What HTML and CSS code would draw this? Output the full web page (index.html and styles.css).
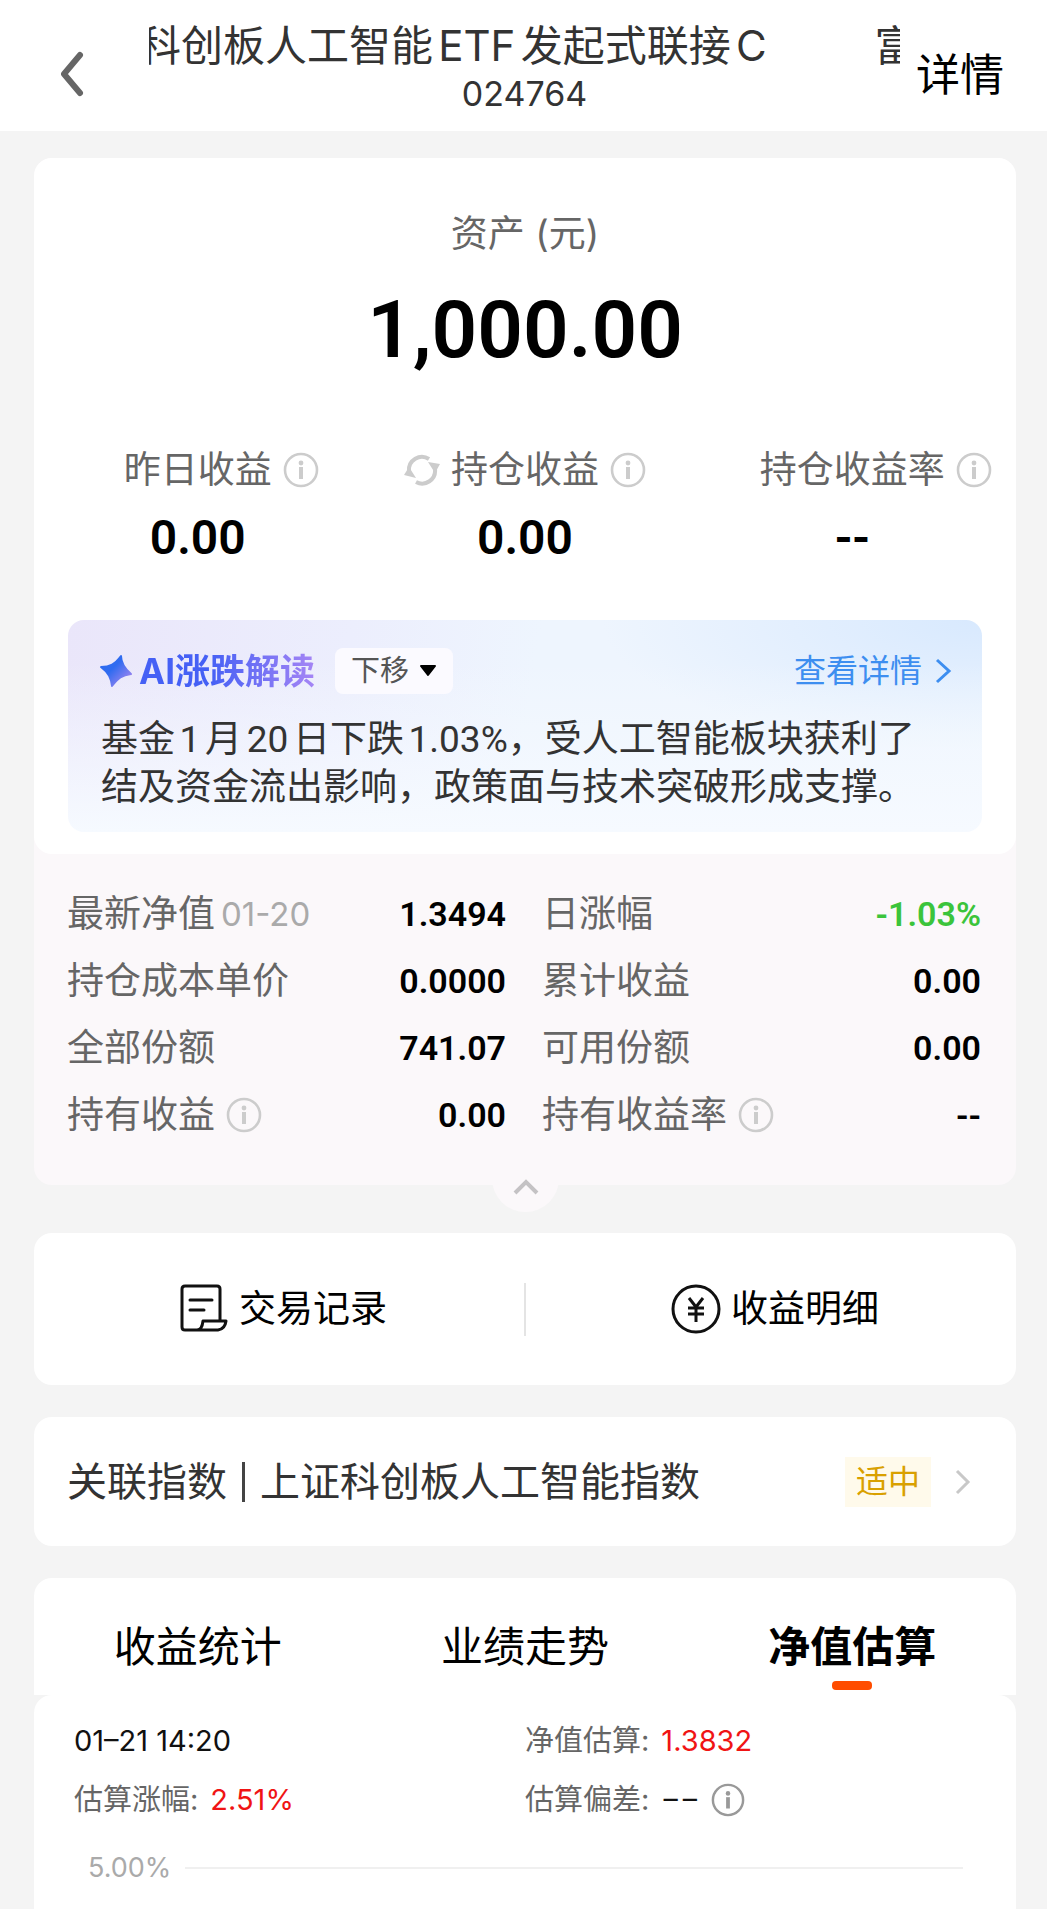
FILE: index.html
```
<!DOCTYPE html>
<html lang="zh-CN">
<head>
<meta charset="utf-8">
<meta name="viewport" content="width=device-width, initial-scale=1">
<title>基金持仓详情</title>
<link rel="stylesheet" href="styles.css">
</head>
<body>
<svg class="sprite" aria-hidden="true">
  <symbol id="info" viewBox="0 0 36 36">
    <circle cx="18" cy="18" r="16" fill="none" stroke="currentColor" stroke-width="2.6"/>
    <circle cx="18" cy="11" r="2.4" fill="currentColor"/>
    <path d="M18 15V27" stroke="currentColor" stroke-width="4" fill="none"/>
  </symbol>
</svg>

<header class="topbar">
  <button class="back" type="button" aria-label="返回">
    <svg width="28" height="46" viewBox="0 0 28 46"><path d="M22 4 6 23l16 19" fill="none" stroke="#666" stroke-width="6" stroke-linecap="round" stroke-linejoin="round"/></svg>
  </button>
  <div class="heading">
    <h1 class="marquee"><span class="marquee-text">科创板人工智能ETF发起式联接C</span><span>富</span></h1>
    <div class="code">024764</div>
  </div>
  <a class="detail-link" href="#">详情</a>
</header>

<main class="page">
  <section class="holding">
    <div class="summary">
      <div class="asset-label">资产 (元)</div>
      <div class="asset-value">1,000.00</div>
      <div class="stats">
        <div class="stat">
          <div class="stat-label"><span></span><span>昨日收益</span><svg class="info"><use href="#info"/></svg></div>
          <div class="stat-value">0.00</div>
        </div>
        <div class="stat">
          <div class="stat-label">
            <svg class="refresh" viewBox="0 0 36 36"><g fill="none" stroke="currentColor" stroke-width="4"><path d="M5 19A13 13 0 0 1 25 7"/><path d="M31 17A13 13 0 0 1 12 30"/></g><path d="M0 23 5 15 12 26zM36 12 24 10 31 21z" fill="currentColor"/></svg>
            <span>持仓收益</span><svg class="info"><use href="#info"/></svg></div>
          <div class="stat-value">0.00</div>
        </div>
        <div class="stat">
          <div class="stat-label"><span></span><span>持仓收益率</span><svg class="info"><use href="#info"/></svg></div>
          <div class="stat-value">--</div>
        </div>
      </div>

      <article class="ai">
        <div class="ai-head">
          <svg class="star" viewBox="0 0 30 32"><defs><linearGradient id="sg" x1="0" y1="0" x2="1" y2="1"><stop offset=".4" stop-color="#2f6bf0"/><stop offset="1" stop-color="#b98cf0"/></linearGradient></defs><path d="M20 1C20 8 23 13 30 19 21 20 17 23 11 31 10 23 8 18 0 12 9 12 14 9 20 1Z" fill="url(#sg)" stroke="url(#sg)" stroke-width="2" stroke-linejoin="round"/></svg>
          <h2 class="ai-title">AI涨跌解读</h2>
          <button class="move" type="button">下移<svg width="18" height="12" viewBox="0 0 18 12"><path d="M2 1h14L9 10z" fill="#000" stroke="#000" stroke-width="2" stroke-linejoin="round"/></svg></button>
          <a class="more" href="#">查看详情<svg width="18" height="28" viewBox="0 0 18 28"><path d="m3 3 12 11L3 25" fill="none" stroke="currentColor" stroke-width="3"/></svg></a>
        </div>
        <p class="ai-text">基金1月20日下跌1.03%，受人工智能板块获利了结及资金流出影响，政策面与技术突破形成支撑。</p>
      </article>
    </div>

    <dl class="metrics">
      <div class="metric"><dt>最新净值<span class="date">01-20</span></dt><dd>1.3494</dd></div>
      <div class="metric"><dt>日涨幅</dt><dd class="down">-1.03%</dd></div>
      <div class="metric"><dt>持仓成本单价</dt><dd>0.0000</dd></div>
      <div class="metric"><dt>累计收益</dt><dd>0.00</dd></div>
      <div class="metric"><dt>全部份额</dt><dd>741.07</dd></div>
      <div class="metric"><dt>可用份额</dt><dd>0.00</dd></div>
      <div class="metric"><dt>持有收益<svg class="info"><use href="#info"/></svg></dt><dd>0.00</dd></div>
      <div class="metric"><dt>持有收益率<svg class="info"><use href="#info"/></svg></dt><dd>--</dd></div>
    </dl>
    <button class="collapse" type="button" aria-label="收起"><svg width="28" height="18" viewBox="0 0 28 18"><path d="M3 15 14 4l11 11" fill="none" stroke="#c4c2c4" stroke-width="4"/></svg></button>
  </section>

  <nav class="card actions">
    <a class="action" href="#">
      <svg width="50" height="50" viewBox="0 0 50 50" fill="none" stroke="#111" stroke-width="3" stroke-linejoin="round" stroke-linecap="round"><path d="M41 36V5q0-3-3-3H6Q3 2 3 5v38q0 3 3 3h33q7-1 8-9H24q-1 9-6 9"/><path d="M11 16h22M11 26h14"/></svg>
      交易记录</a>
    <a class="action" href="#">
      <svg width="50" height="50" viewBox="0 0 50 50" fill="none" stroke="#111" stroke-width="3"><circle cx="25" cy="25" r="23"/><path d="m18 14 7 9 7-9M25 23v15M17 24h16M17 30h16"/></svg>
      收益明细</a>
  </nav>

  <a class="card index" href="#">
    <span>关联指数</span><span class="bar"></span><span>上证科创板人工智能指数</span>
    <span class="tag">适中</span>
    <svg width="16" height="28" viewBox="0 0 16 28"><path d="m2 3 11 11L2 25" fill="none" stroke="#c8c8c8" stroke-width="3"/></svg>
  </a>

  <section class="estimate">
    <div class="tabs" role="tablist">
      <button class="tab" type="button" role="tab">收益统计</button>
      <button class="tab" type="button" role="tab">业绩走势</button>
      <button class="tab active" type="button" role="tab" aria-selected="true">净值估算</button>
    </div>
    <div class="panel">
      <div class="facts">
        <div class="fact"><span class="dark">01–21 14:20</span></div>
        <div class="fact">净值估算: <span class="up">1.3832</span></div>
        <div class="fact">估算涨幅: <span class="up">2.51%</span></div>
        <div class="fact">估算偏差: <span class="dark none">––</span><svg class="info"><use href="#info"/></svg></div>
      </div>
      <div class="axis"><span>5.00%</span><span class="gridline"></span></div>
    </div>
  </section>
</main>
</body>
</html>
```
FILE: styles.css
```
* { box-sizing: border-box; }

body {
  display: flex;
  flex-direction: column;
  min-height: 100vh;
  margin: 0;
  background: #f4f4f4;
  color: #333;
  font-family: Inter, "Noto Sans CJK SC", sans-serif;
  line-height: 48px;
}

h1, h2, p, dl, dd { margin: 0; font-weight: 400; }
a { color: inherit; text-decoration: none; }
button { padding: 0; border: 0; background: none; color: inherit; font: inherit; }
svg { display: block; flex: none; }
.sprite { position: absolute; width: 0; height: 0; }

.info { width: 36px; height: 36px; color: #ccc; }

/* Top bar */
.topbar {
  display: flex;
  align-items: center;
  height: 131px;
  padding: 0 43px 0 58px;
  background: #fff;
}
.back { margin-top: 16px; }
.heading { flex: 1; min-width: 0; margin: 0 16px 0 63px; text-align: center; }
.marquee {
  display: flex;
  gap: 108px;
  overflow: hidden;
  font-size: 42px;
  line-height: 56px;
  white-space: nowrap;
  text-autospace: normal;
}
.marquee-text { margin-left: -10px; }
.code { font-size: 34px; line-height: 40px; }
.detail-link { margin-top: 18px; color: #000; font-size: 44px; line-height: 60px; }

.page { flex: 1; display: flex; flex-direction: column; padding: 27px 31px 0 34px; }

/* Holding summary */
.holding { position: relative; border-radius: 18px; background: #fbf8fa; }
.summary { padding: 52px 0 22px; border-radius: 18px; background: #fff; }
.asset-label { color: #666; font-size: 37px; text-align: center; }
.asset-value {
  color: #000;
  font: 600 80px/100px Roboto, sans-serif;
  text-align: center;
  margin-top: 22px;
}
.stats { display: grid; grid-template-columns: repeat(3, 1fr); margin-top: 66px; }
.stat-label {
  display: grid;
  grid-template-columns: 1fr auto 1fr;
  align-items: center;
  gap: 11px;
  color: #666;
  font-size: 37px;
}
.refresh { width: 36px; height: 36px; justify-self: end; color: #ccc; }
.stat-value {
  margin-top: 14px;
  color: #000;
  font: 600 48px/60px Roboto, sans-serif;
  text-align: center;
}

/* AI commentary */
.ai {
  margin: 52px 34px 0;
  padding: 27px 30px 20px 33px;
  border-radius: 16px;
  background:
    linear-gradient(to bottom, #f5faff00 20%, #f6faff 100%),
    radial-gradient(ellipse 380px 130px at 100% 0, #d8e9fe, #d8e9fe00),
    linear-gradient(100deg, #eae6fa, #eceefd 30%, #eef5fe 50%);
}
.ai-head { display: flex; align-items: center; }
.star { width: 30px; height: 32px; margin-right: 8px; overflow: visible; }
.ai-title {
  background: linear-gradient(90deg, #4560f5 40%, #a585f5);
  background-clip: text;
  color: transparent;
  font-size: 35px;
  font-weight: 700;
}
.move {
  display: flex;
  align-items: center;
  gap: 10px;
  height: 46px;
  margin-left: 20px;
  padding: 0 16px;
  border-radius: 8px;
  background: #fbfaff;
  color: #555;
  font-size: 29px;
}
.more { display: flex; align-items: center; gap: 12px; margin-left: auto; color: #3d8ef0; font-size: 32px; }
.ai-text {
  margin-top: 21px;
  padding-right: 24px;
  color: #333;
  font-family: Roboto, "Noto Sans CJK SC", sans-serif;
  font-size: 37px;
  text-autospace: normal;
}

/* Metrics */
.metrics {
  display: grid;
  grid-template-columns: 1fr 1fr;
  column-gap: 36px;
  padding: 26px 35px 37px 33px;
}
.metric { display: flex; align-items: center; justify-content: space-between; height: 67px; }
.metric dt { display: flex; align-items: center; color: #666; font-size: 37px; }
.metric dt .info { margin-left: 11px; }
.metric dd { color: #000; font: 600 34px/48px Roboto, sans-serif; }
.metric dd.down { color: #3bc43b; }
.date { margin-left: 6px; color: #aaa; font-size: 33px; }
.collapse {
  position: absolute;
  bottom: -27px;
  left: calc(50% - 33px);
  display: flex;
  align-items: flex-end;
  justify-content: center;
  width: 67px;
  height: 67px;
  padding-bottom: 16px;
  border-radius: 50%;
  background: #fbf8fa;
}

.card { border-radius: 18px; background: #fff; }

/* Shortcuts */
.actions { display: flex; align-items: center; height: 152px; margin-top: 48px; }
.action {
  flex: 1;
  display: flex;
  align-items: center;
  justify-content: center;
  gap: 10px;
  height: 53px;
  padding-left: 8px;
  color: #000;
  font-size: 37px;
}
.action + .action { border-left: 2px solid #e4e4e4; }

/* Related index */
.index { display: flex; align-items: center; height: 129px; margin-top: 32px; padding: 0 45px 0 33px; font-size: 40px; }
.bar { width: 3px; height: 40px; margin: 0 15px; background: #444; }
.tag { margin: 0 24px 0 auto; padding: 0 11px; background: #fffaeb; color: #d9a000; font-size: 32px; line-height: 50px; }

/* Estimate */
.estimate { flex: 1; display: flex; flex-direction: column; margin-top: 32px; }
.tabs {
  display: grid;
  grid-template-columns: repeat(3, 1fr);
  height: 117px;
  border-radius: 18px 18px 0 0;
  background: #fff;
}
.tab { position: relative; padding-top: 20px; color: #000; font-size: 42px; }
.tab.active { font-weight: 700; }
.tab.active::after {
  content: "";
  position: absolute;
  bottom: 5px;
  left: calc(50% - 20px);
  width: 40px;
  height: 9px;
  border-radius: 4px;
  background: #ff4d00;
}
.panel { flex: 1; padding: 16px 53px 0 40px; border-radius: 18px 18px 0 0; background: #fff; }
.facts { display: grid; grid-template-columns: 451px 1fr; }
.fact { display: flex; align-items: center; gap: 12px; height: 59px; color: #666; font-size: 29px; }
.fact .info { width: 34px; height: 34px; color: #999; }
.dark { color: #111; }
.none { font-family: Roboto, sans-serif; }
.up { color: #f01414; }
.axis { display: flex; align-items: center; gap: 14px; height: 78px; padding-left: 14px; color: #aaa; font-size: 27px; }
.gridline { flex: 1; height: 2px; background: #f0f0f0; }
```
